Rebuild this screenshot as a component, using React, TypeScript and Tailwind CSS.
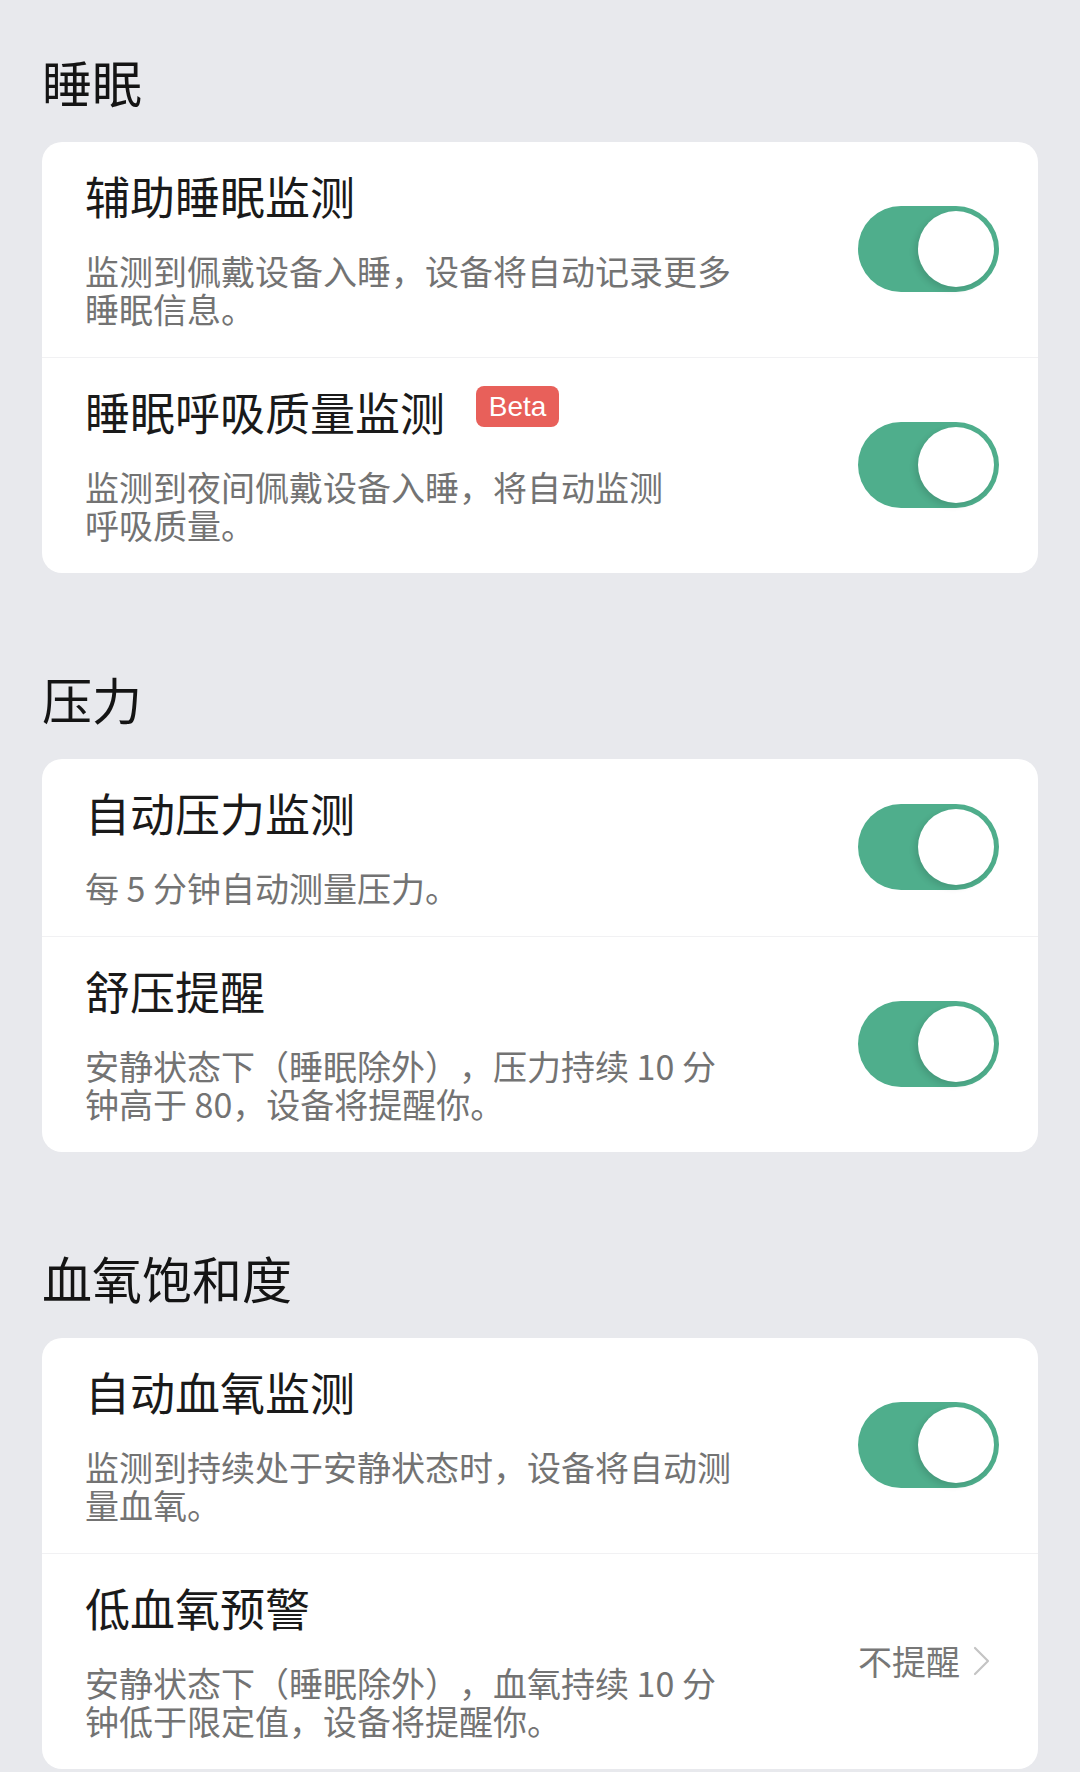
import { ReactNode } from "react";

const cjk = "font-['Noto_Sans_CJK_SC','Noto_Sans',sans-serif] [text-spacing-trim:space-all]";

function Toggle() {
  return (
    <div className="flex h-[86px] w-[141px] shrink-0 items-center justify-end rounded-full bg-[#4fae8c] pr-[5px]">
      <div className="h-[76px] w-[76px] rounded-full bg-white shadow-[-3px_3px_6px_rgba(0,0,0,0.12)]" />
    </div>
  );
}

function Row({
  title,
  badge,
  children,
  right,
  divider,
}: {
  title: string;
  badge?: string;
  children: ReactNode;
  right: ReactNode;
  divider?: boolean;
}) {
  return (
    <div className={`flex items-center justify-between pl-[43px] pr-[39px] pt-[28px] pb-[29px] ${divider ? "border-t border-[#f1f1f3]" : ""}`}>
      <div className="min-w-0">
        <div className="flex items-center">
          <h3 className="text-[45px] leading-[52px] font-normal text-[#1a1a1a]">{title}</h3>
          {badge && (
            <span className="ml-[31px] mb-[11px] flex h-[41px] w-[83px] items-center justify-center rounded-[8px] bg-[#e8605a] font-['Liberation_Sans',sans-serif] text-[28px] text-white">
              {badge}
            </span>
          )}
        </div>
        <p className="mt-[30px] text-[34px] leading-[38px] text-[#737373] whitespace-nowrap">{children}</p>
      </div>
      {right}
    </div>
  );
}

function Section({ title, children, first }: { title: string; children: ReactNode; first?: boolean }) {
  return (
    <section className={first ? "" : "mt-[95px]"}>
      <h2 className="pl-[42px] text-[50px] leading-[60px] font-normal text-[#141414]">{title}</h2>
      <div className="mx-[42px] mt-[31px] overflow-hidden rounded-[20px] bg-white">{children}</div>
    </section>
  );
}

export default function App() {
  return (
    <main className={`min-h-[1772px] bg-[#e8e9ed] pt-[51px] ${cjk}`}>
      <Section title="睡眠" first>
        <Row title="辅助睡眠监测" right={<Toggle />}>
          监测到佩戴设备入睡，设备将自动记录更多
          <br />
          睡眠信息。
        </Row>
        <Row title="睡眠呼吸质量监测" badge="Beta" right={<Toggle />} divider>
          监测到夜间佩戴设备入睡，将自动监测
          <br />
          呼吸质量。
        </Row>
      </Section>

      <Section title="压力">
        <Row title="自动压力监测" right={<Toggle />}>
          每 5 分钟自动测量压力。
        </Row>
        <Row title="舒压提醒" right={<Toggle />} divider>
          安静状态下（睡眠除外），压力持续 10 分
          <br />
          钟高于 80，设备将提醒你。
        </Row>
      </Section>

      <Section title="血氧饱和度">
        <Row title="自动血氧监测" right={<Toggle />}>
          监测到持续处于安静状态时，设备将自动测
          <br />
          量血氧。
        </Row>
        <Row
          title="低血氧预警"
          divider
          right={
            <div className="flex shrink-0 items-center gap-[13px] pr-[9px] text-[#777]">
              <span className="text-[34px] leading-[40px]">不提醒</span>
              <svg width="17" height="30" viewBox="0 0 17 30" fill="none">
                <path d="M2 2l13 13L2 28" stroke="#c4c4c4" strokeWidth="2.2" strokeLinecap="round" strokeLinejoin="round" />
              </svg>
            </div>
          }
        >
          安静状态下（睡眠除外），血氧持续 10 分
          <br />
          钟低于限定值，设备将提醒你。
        </Row>
      </Section>
    </main>
  );
}
